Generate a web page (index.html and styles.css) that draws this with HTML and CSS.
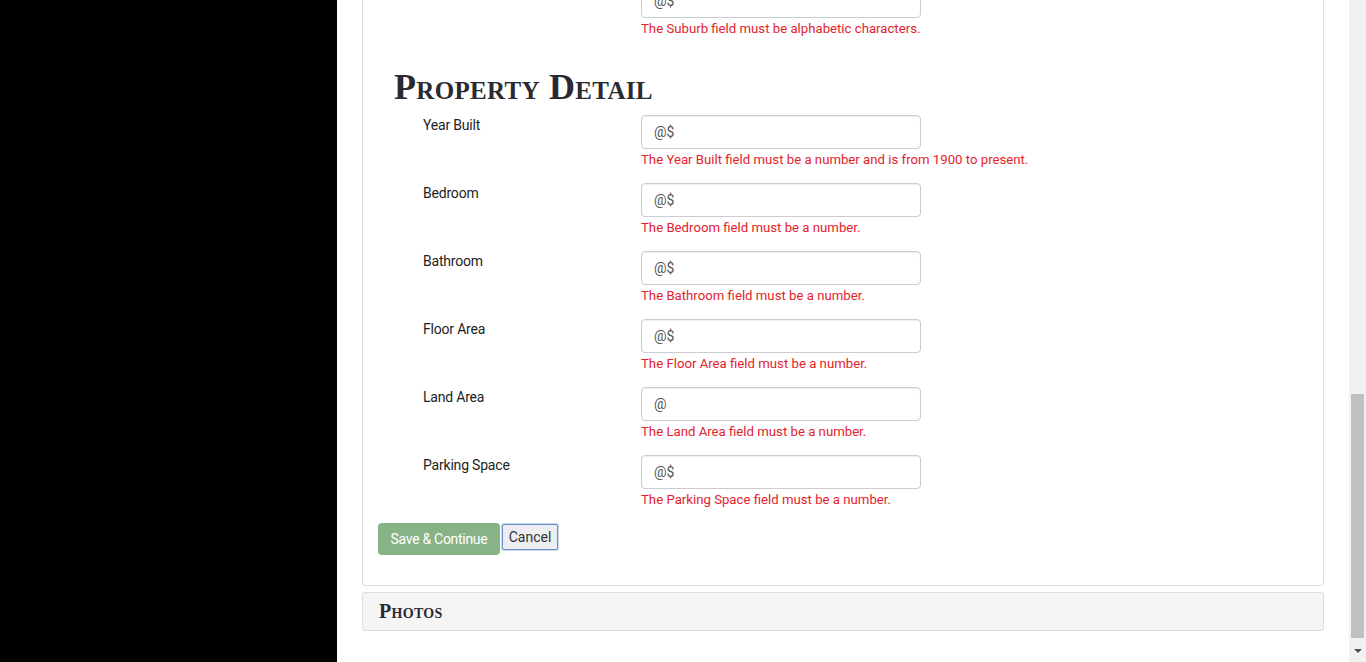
FILE: index.html
```html
<!DOCTYPE html>
<html lang="en">
<head>
<meta charset="utf-8">
<title>Property Detail</title>
<link rel="stylesheet" href="styles.css">
</head>
<body>
<div class="sidebar"></div>
<main class="main">
  <section class="panel">
    <div class="form-row partial">
      <span class="label"></span>
      <div class="field">
        <div class="input">@$</div>
        <div class="error">The Suburb field must be alphabetic characters.</div>
      </div>
    </div>

    <h2 class="heading">Property Detail</h2>

    <div class="form-row">
      <span class="label">Year Built</span>
      <div class="field">
        <div class="input">@$</div>
        <div class="error">The Year Built field must be a number and is from 1900 to present.</div>
      </div>
    </div>
    <div class="form-row">
      <span class="label">Bedroom</span>
      <div class="field">
        <div class="input">@$</div>
        <div class="error">The Bedroom field must be a number.</div>
      </div>
    </div>
    <div class="form-row">
      <span class="label">Bathroom</span>
      <div class="field">
        <div class="input">@$</div>
        <div class="error">The Bathroom field must be a number.</div>
      </div>
    </div>
    <div class="form-row">
      <span class="label">Floor Area</span>
      <div class="field">
        <div class="input">@$</div>
        <div class="error">The Floor Area field must be a number.</div>
      </div>
    </div>
    <div class="form-row">
      <span class="label">Land Area</span>
      <div class="field">
        <div class="input">@</div>
        <div class="error">The Land Area field must be a number.</div>
      </div>
    </div>
    <div class="form-row">
      <span class="label">Parking Space</span>
      <div class="field">
        <div class="input">@$</div>
        <div class="error">The Parking Space field must be a number.</div>
      </div>
    </div>

    <div class="actions">
      <button class="btn-save" type="button">Save &amp; Continue</button>
      <button class="btn-cancel" type="button">Cancel</button>
    </div>
  </section>

  <section class="panel-collapsed">
    <h3 class="panel-title">Photos</h3>
  </section>
</main>
<div class="scrollbar">
  <div class="scroll-track"><div class="scroll-thumb"></div></div>
  <div class="scroll-arrow"></div>
</div>
</body>
</html>
```
FILE: styles.css
```css
html, body {
  margin: 0;
  padding: 0;
  height: 662px;
  overflow: hidden;
}
body {
  display: flex;
  background: #fff;
  font-family: Roboto, "Liberation Sans", sans-serif;
  color: #333;
}
.sidebar {
  width: 337px;
  flex: none;
  background: #000;
}
.main {
  flex: 1;
  padding: 0 25px;
  min-width: 0;
}
.panel {
  border: 1px solid #ddd;
  border-top: none;
  border-radius: 0 0 4px 4px;
  padding: 0 15px 30px 15px;
  margin-top: -16px;
}
.form-row {
  display: grid;
  grid-template-columns: 218px 280px;
  padding-left: 45px;
  margin-bottom: 14px;
}
.label {
  font-size: 14px;
  line-height: 20px;
  font-weight: 400;
  color: #1e1e1e;
  letter-spacing: -0.2px;
}
.input {
  box-sizing: border-box;
  height: 34px;
  border: 1px solid #ccc;
  border-radius: 4px;
  padding: 0 12px;
  font-size: 14px;
  line-height: 32px;
  color: #555;
  box-shadow: inset 0 1px 1px rgba(0,0,0,.075);
}
.error {
  margin-top: 1px;
  font-size: 13.2px;
  line-height: 19px;
  color: #e2232d;
  white-space: nowrap;
}
.heading {
  margin: 24px 0 3px 16px;
  font-family: "Liberation Serif", serif;
  font-variant: small-caps;
  font-weight: bold;
  font-size: 36px;
  line-height: 50px;
  color: #2a2a30;
  letter-spacing: 0.3px;
}
.actions {
  display: flex;
  align-items: flex-start;
  gap: 2px;
  margin-top: 2px;
}
.btn-save {
  height: 32px;
  width: 122px;
  border: none;
  border-radius: 4px;
  background: #88b387;
  color: #fff;
  font-family: Roboto, "Liberation Sans", sans-serif;
  font-size: 14px;
  padding: 0;
  letter-spacing: -0.3px;
}
.btn-cancel {
  margin-top: 1px;
  height: 26px;
  width: 56px;
  border: 1px solid #6a90cc;
  border-radius: 2px;
  background: #eceef2;
  color: #333;
  font-family: Roboto, "Liberation Sans", sans-serif;
  font-size: 14px;
  padding: 0;
  box-shadow: 0 0 0 1px #c7d6ee;
}
.panel-collapsed {
  margin-top: 6px;
  border: 1px solid #ddd;
  border-radius: 3px;
  background: #f5f5f5;
  height: 37px;
  padding: 0 16px;
}
.panel-title {
  margin: 0;
  font-family: "Liberation Serif", serif;
  font-variant: small-caps;
  font-weight: bold;
  font-size: 20px;
  line-height: 36px;
  color: #2a2a30;
  letter-spacing: 0.3px;
}
.scrollbar {
  width: 17px;
  flex: none;
  background: #f1f1f1;
  display: flex;
  flex-direction: column;
}
.scroll-track {
  flex: 1;
  padding-top: 394px;
  padding-bottom: 5px;
  display: flex;
}
.scroll-thumb {
  flex: 1;
  margin: 0 2px;
  background: #c1c1c1;
}
.scroll-arrow {
  height: 19px;
  position: relative;
}
.scroll-arrow::after {
  content: "";
  position: absolute;
  left: 5px;
  top: 6px;
  border-left: 4px solid transparent;
  border-right: 4px solid transparent;
  border-top: 4px solid #505050;
}
```
